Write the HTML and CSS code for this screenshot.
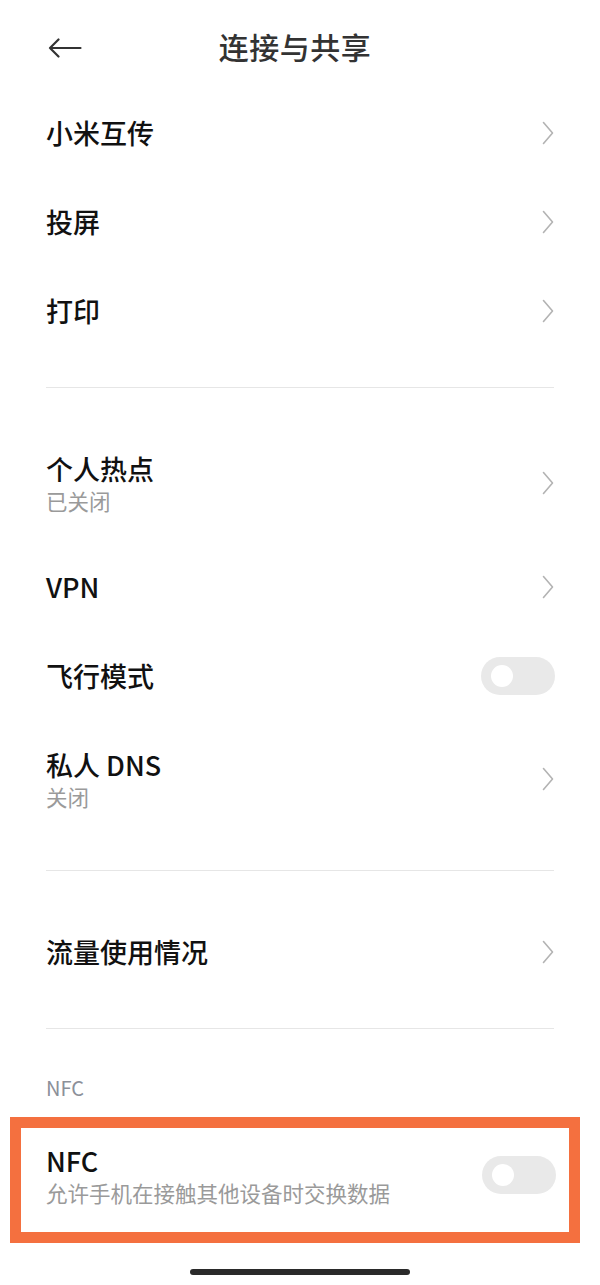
FILE: index.html
```html
<!DOCTYPE html>
<html lang="zh-CN">

<head>
    <meta name="viewport" content="width=device-width, initial-scale=1">
    <title>连接与共享</title>
    <link rel="stylesheet" href="styles.css">
</head>

<body>
    <header class="topbar">
        <svg class="back" viewBox="0 0 34 20" width="34" height="20">
            <path d="M32.5 10H2M10.5 1.5L2 10l8.5 8.5" fill="none" stroke="#333" stroke-width="2.2" stroke-linecap="round" stroke-linejoin="round"/>
        </svg>
        <h1>连接与共享</h1>
    </header>

    <main>
        <div class="row">
            <div class="text"><div class="title">小米互传</div></div>
            <svg class="chevron" viewBox="0 0 12 24"><path d="M1.5 1.5L10.5 12 1.5 22.5"/></svg>
        </div>
        <div class="row">
            <div class="text"><div class="title">投屏</div></div>
            <svg class="chevron" viewBox="0 0 12 24"><path d="M1.5 1.5L10.5 12 1.5 22.5"/></svg>
        </div>
        <div class="row">
            <div class="text"><div class="title">打印</div></div>
            <svg class="chevron" viewBox="0 0 12 24"><path d="M1.5 1.5L10.5 12 1.5 22.5"/></svg>
        </div>

        <hr class="divider">

        <div class="row double">
            <div class="text">
                <div class="title">个人热点</div>
                <div class="sub">已关闭</div>
            </div>
            <svg class="chevron" viewBox="0 0 12 24"><path d="M1.5 1.5L10.5 12 1.5 22.5"/></svg>
        </div>
        <div class="row">
            <div class="text"><div class="title">VPN</div></div>
            <svg class="chevron" viewBox="0 0 12 24"><path d="M1.5 1.5L10.5 12 1.5 22.5"/></svg>
        </div>
        <div class="row">
            <div class="text"><div class="title">飞行模式</div></div>
            <span class="switch"></span>
        </div>
        <div class="row double">
            <div class="text">
                <div class="title">私人 DNS</div>
                <div class="sub">关闭</div>
            </div>
            <svg class="chevron" viewBox="0 0 12 24"><path d="M1.5 1.5L10.5 12 1.5 22.5"/></svg>
        </div>

        <hr class="divider">

        <div class="row">
            <div class="text"><div class="title">流量使用情况</div></div>
            <svg class="chevron" viewBox="0 0 12 24"><path d="M1.5 1.5L10.5 12 1.5 22.5"/></svg>
        </div>

        <hr class="divider">

        <div class="section">NFC</div>

        <div class="highlight">
            <div class="row nfc">
                <div class="text">
                    <div class="title">NFC</div>
                    <div class="sub">允许手机在接触其他设备时交换数据</div>
                </div>
                <span class="switch"></span>
            </div>
        </div>
    </main>

    <div class="home-bar"></div>
</body>

</html>
```

FILE: styles.css
```css
html,
body {
    margin: 0;
    padding: 0;
}

body {
    width: 600px;
    height: 1285px;
    background: #fff;
    font-family: "Noto Sans CJK SC", "Noto Sans", sans-serif;
    color: #111;
    overflow: hidden;
}

.topbar {
    height: 88px;
    display: flex;
    align-items: flex-start;
    justify-content: center;
    position: relative;
}

.topbar .back {
    position: absolute;
    left: 48px;
    top: 38px;
}

.topbar h1 {
    margin: 26px 10px 0 0;
    font-size: 30px;
    line-height: 40px;
    font-weight: 500;
    color: #333;
    letter-spacing: 0.5px;
}

.row {
    height: 89px;
    padding: 0 46px;
    display: flex;
    align-items: center;
    justify-content: space-between;
}

.row.double {
    height: 118px;
}

.title {
    font-size: 27px;
    font-weight: 500;
    line-height: 34px;
    color: #111;
}

.sub {
    font-size: 21.5px;
    line-height: 28px;
    color: #9a9a9a;
    margin-top: 1px;
}

.chevron {
    width: 12px;
    height: 24px;
    fill: none;
    stroke: #b3b3b3;
    stroke-width: 1.6;
    stroke-linecap: round;
    stroke-linejoin: round;
}

.switch {
    width: 74px;
    height: 38px;
    border-radius: 19px;
    background: #e9e9e9;
    display: flex;
    align-items: center;
    padding-left: 10px;
    box-sizing: border-box;
    margin-right: -1px;
}

.switch::before {
    content: "";
    width: 22px;
    height: 22px;
    border-radius: 50%;
    background: #fff;
}

.divider {
    margin: 32px 46px 36px;
    border: none;
    border-top: 1px solid #e6e6e6;
    height: 0;
}

.section {
    padding: 4px 46px 0;
    height: 38px;
    font-size: 20px;
    color: #8c9099;
    line-height: 38px;
}

.highlight {
    margin: 10px 20px 0 10px;
    border: 11px solid #f4703f;
    height: 104px;
}

.row.nfc {
    height: 104px;
    padding: 0 14px 10px 25px;
    box-sizing: border-box;
}

.home-bar {
    width: 220px;
    height: 6px;
    border-radius: 3px;
    background: #2a2a2a;
    margin: 26px auto 0;
}
```
